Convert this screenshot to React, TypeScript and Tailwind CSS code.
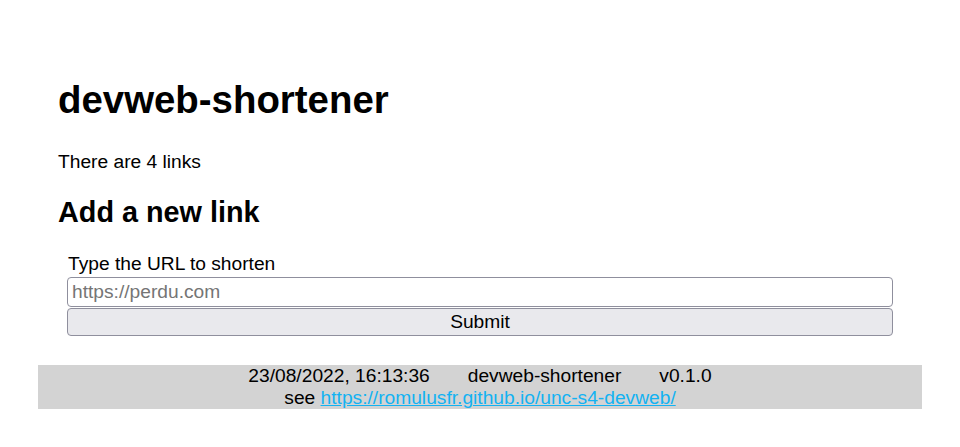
export default function App() {
  return (
    <div className="bg-white text-black min-h-[447px] px-[38px] pt-[78px]" style={{ fontFamily: '"Liberation Sans", Arial, sans-serif' }}>
      <main className="px-[20px]">
        <h1 className="text-[38.4px] font-bold leading-[44px] m-0">devweb-shortener</h1>
        <p className="text-[19.2px] leading-[22px] mt-[29px]">There are 4 links</p>
        <h2 className="text-[28.8px] font-bold leading-[33px] mt-[23px]">Add a new link</h2>
        <form className="px-[9px] mt-[24px]" onSubmit={(e) => e.preventDefault()}>
          <label className="block text-[19.2px] leading-[22px] pl-[1px]" htmlFor="url">Type the URL to shorten</label>
          <input
            id="url"
            type="text"
            placeholder="https://perdu.com"
            className="block w-full h-[30px] mt-[2px] border border-[#8f8f9d] rounded-[4px] px-[4px] text-[19.2px] leading-[22px] placeholder:text-[#757575] bg-white outline-none"
          />
          <button
            type="submit"
            className="block w-full h-[28px] mt-px border border-[#8f8f9d] rounded-[4px] bg-[#e9e9ed] text-[19.2px] leading-[22px] text-black"
          >
            Submit
          </button>
        </form>
      </main>
      <footer className="bg-[#d3d3d3] mt-[29px] text-[19.2px] leading-[22px] text-center">
        <div className="flex justify-center gap-[38px]">
          <span>23/08/2022, 16:13:36</span>
          <span>devweb-shortener</span>
          <span>v0.1.0</span>
        </div>
        <div>
          see{" "}
          <a href="#" className="text-[#12b2f2] underline">https://romulusfr.github.io/unc-s4-devweb/</a>
        </div>
      </footer>
    </div>
  );
}
